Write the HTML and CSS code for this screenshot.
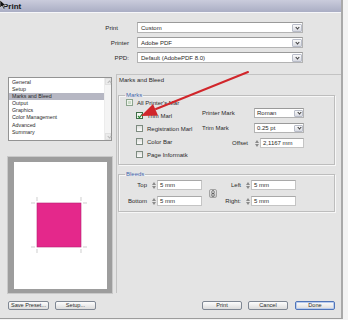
FILE: index.html
```html
<!DOCTYPE html>
<html lang="en">
<head>
  <meta charset="UTF-8" />
  <title>Print</title>
  <link rel="stylesheet" href="styles.css">
</head>
<body>
  <div class="dialog">
    <div class="titlebar">Print</div>

    <div class="content">
      <div class="presets">
        <label class="lbl lbl-print">Print</label>
        <div class="select"><span>Custom</span><i class="drop"></i></div>
        <label class="lbl">Printer</label>
        <div class="select"><span>Adobe PDF</span><i class="drop"></i></div>
        <label class="lbl">PPD:</label>
        <div class="select"><span>Default (AdobePDF 8.0)</span><i class="drop"></i></div>
      </div>

      <div class="main">
        <div class="side">
          <div class="list">
            <ul>
              <li>General</li>
              <li>Setup</li>
              <li class="active">Marks and Bleed</li>
              <li>Output</li>
              <li>Graphics</li>
              <li>Color Management</li>
              <li>Advanced</li>
              <li>Summary</li>
            </ul>
            <div class="scrollbar">
              <span class="sb-up"></span>
              <span class="sb-down"></span>
            </div>
          </div>

          <div class="preview">
            <svg width="91" height="127" viewBox="0 0 91 127">
              <rect x="23" y="41" width="44" height="44" fill="#e4288b" stroke="#b52073" stroke-width="0.6" />
              <g stroke="#b9b9b9" stroke-width="0.7">
                <line x1="17" y1="41" x2="21" y2="41" />
                <line x1="23" y1="35" x2="23" y2="39" />
                <line x1="69" y1="41" x2="73" y2="41" />
                <line x1="67" y1="35" x2="67" y2="39" />
                <line x1="17" y1="85" x2="21" y2="85" />
                <line x1="23" y1="87" x2="23" y2="91" />
                <line x1="69" y1="85" x2="73" y2="85" />
                <line x1="67" y1="87" x2="67" y2="91" />
              </g>
            </svg>
          </div>
        </div>

        <div class="panel">
          <div class="panel-title">Marks and Bleed</div>

          <fieldset class="group marks">
            <legend>Marks</legend>
            <div class="marks-body">
              <div class="checks">
                <div class="check top"><span class="cb mixed"></span>All Printer's Mar</div>
                <div class="check"><span class="cb checked"><svg width="6" height="6" viewBox="0 0 6 6"><path d="M1 3 L2.5 4.6 L5.2 1.2" fill="none" stroke="#23862c" stroke-width="1.1" /></svg></span>Trim Marl</div>
                <div class="check"><span class="cb"></span>Registration Marl</div>
                <div class="check"><span class="cb"></span>Color Bar</div>
                <div class="check"><span class="cb"></span>Page Informatk</div>
              </div>
              <div class="mark-opts">
                <label class="opt-lbl">Printer Mark</label>
                <div class="select small"><span>Roman</span><i class="drop"></i></div>
                <label class="opt-lbl">Trim Mark</label>
                <div class="select small"><span>0.25 pt</span><i class="drop"></i></div>
                <label class="opt-lbl right">Offset</label>
                <div class="spin-field"><i class="spin"></i><span class="field">2,1167 mm</span></div>
              </div>
            </div>
          </fieldset>

          <fieldset class="group bleeds">
            <legend>Bleeds</legend>
            <div class="bleeds-body">
              <label class="b-lbl">Top</label>
              <div class="spin-field"><i class="spin"></i><span class="field">5 mm</span></div>
              <div class="link">
                <svg width="4" height="7" viewBox="0 0 4 7">
                  <rect x="0.8" y="0.5" width="2.4" height="3.2" rx="1.2" fill="none" stroke="#555" stroke-width="0.8" />
                  <rect x="0.8" y="3.3" width="2.4" height="3.2" rx="1.2" fill="none" stroke="#555" stroke-width="0.8" />
                </svg>
              </div>
              <label class="b-lbl">Left</label>
              <div class="spin-field"><i class="spin"></i><span class="field">5 mm</span></div>
              <label class="b-lbl">Bottom</label>
              <div class="spin-field"><i class="spin"></i><span class="field">5 mm</span></div>
              <label class="b-lbl">Right:</label>
              <div class="spin-field"><i class="spin"></i><span class="field">5 mm</span></div>
            </div>
          </fieldset>
        </div>
      </div>

      <div class="footer">
        <button class="btn">Save Preset...</button>
        <button class="btn">Setup...</button>
        <span class="spacer"></span>
        <button class="btn">Print</button>
        <button class="btn">Cancel</button>
        <button class="btn default">Done</button>
      </div>
    </div>

    <!-- annotation drawn over the dialog -->
    <svg class="overlay" width="348" height="320" viewBox="0 0 348 320">
      <path d="M0 0 L0 8 L2 6 L3.4 9 L4.6 8.4 L3.3 5.6 L6 5.6 Z" fill="#111" stroke="#fff" stroke-width="0.5" />
      <line x1="248" y1="72" x2="156" y2="109" stroke="#d1262b" stroke-width="2" stroke-linecap="round" />
      <polygon points="141,116 158,115.5 153,104" fill="#d1262b" />
    </svg>
  </div>
</body>
</html>
```

FILE: styles.css
```css
/* Reset and base */
* {
  box-sizing: border-box;
  margin: 0;
  padding: 0;
}

body {
  width: 348px;
  height: 320px;
  overflow: hidden;
  background: #f3f3f3;
  font-family: "Liberation Sans", Arial, sans-serif;
  font-size: 6px;
  color: #2a2a2a;
}

.dialog {
  position: relative;
  width: 343px;
  height: 319px;
  background: #e4e4e4;
  border-right: 2px solid #a9a9a9;
  border-bottom: 1px solid #9c9c9c;
}

.titlebar {
  height: 13px;
  padding-left: 3px;
  display: flex;
  align-items: center;
  background: linear-gradient(#caccdc, #aaaec4);
  border-bottom: 1px solid #f6f6f9;
  font-size: 8px;
  font-weight: bold;
  color: #161616;
}

.content {
  padding: 9px 0 0 8px;
}

/* Preset rows */
.presets {
  display: grid;
  grid-template-columns: 123px 166px;
  grid-auto-rows: 11px;
  column-gap: 6px;
  row-gap: 4px;
}

.lbl {
  align-self: center;
  text-align: right;
  padding-right: 2px;
  font-size: 6.2px;
}

.lbl-print {
  padding-right: 13px;
}

.select {
  display: flex;
  align-items: center;
  padding-left: 3px;
  background: #fff;
  border: 1px solid #b3b3b3;
  border-top-color: #9a9a9a;
  white-space: nowrap;
}

.drop {
  margin-left: auto;
  margin-right: 0;
  width: 10px;
  height: 8px;
  background: linear-gradient(#fafafa, #d7d9e1);
  border: 1px solid #b9bdc9;
  border-radius: 1px;
  position: relative;
}

.drop::after {
  content: "";
  position: absolute;
  left: 3px;
  top: 1px;
  width: 2px;
  height: 2px;
  border-right: 1px solid #3a3a3a;
  border-bottom: 1px solid #3a3a3a;
  transform: rotate(45deg);
}

/* Left column */
.main {
  display: flex;
  margin-top: 11px;
}

.side {
  width: 104px;
  padding-top: 3px;
}

.list {
  height: 64px;
  display: flex;
  background: #fff;
  border: 1px solid #939393;
}

.list ul {
  flex: 1;
  list-style: none;
  padding-top: 0.5px;
  font-size: 5.3px;
}

.list li {
  height: 7.2px;
  line-height: 7.2px;
  padding-left: 3px;
}

.list li.active {
  background: #b6b7c3;
}

.scrollbar {
  width: 7px;
  display: flex;
  flex-direction: column;
  justify-content: space-between;
  background: #f4f4f4;
  border-left: 1px solid #ececec;
}

.sb-up,
.sb-down {
  height: 7px;
  background: #ebebeb;
  border: 1px solid #e0e0e0;
  position: relative;
}

.sb-up::after,
.sb-down::after {
  content: "";
  position: absolute;
  left: 1.5px;
  width: 2px;
  height: 2px;
  border-left: 1px solid #b8b8b8;
  border-top: 1px solid #b8b8b8;
}

.sb-up::after {
  top: 2px;
  transform: rotate(45deg);
}

.sb-down::after {
  top: 0.5px;
  transform: rotate(225deg);
}

.preview {
  margin-top: 16px;
  height: 136px;
  background: #fff;
  border: 5px solid #9d9d9d;
  border-left-width: 6px;
  border-bottom-width: 4px;
  box-shadow: 0 0 0 1px #c9c9c9;
}

.preview svg {
  display: block;
}

/* Right panel */
.panel {
  flex: 1;
  margin-left: 4px;
  padding: 0 6px 0 1px;
  border-left: 1px solid #c3c3c3;
  border-top: 1px solid #c3c3c3;
}

.panel-title {
  height: 10px;
  line-height: 10px;
  padding-left: 1px;
}

.group {
  border: 1px solid #bdbdbd;
  box-shadow: inset 1px 1px 0 #f7f7f7, 1px 1px 0 #f7f7f7;
}

.group legend {
  margin-left: 6px;
  padding: 0 1px;
  line-height: 6px;
  color: #4566ad;
}

.marks {
  margin-top: 7px;
  padding-bottom: 3px;
}

.marks-body {
  display: flex;
}

.checks {
  width: 83px;
  margin-top: -2px;
}

.check {
  height: 13px;
  display: flex;
  align-items: center;
  gap: 4px;
  padding-left: 17px;
  white-space: nowrap;
}

.check.top {
  padding-left: 7px;
}

.cb {
  width: 7px;
  height: 7px;
  flex-shrink: 0;
  border: 1px solid #7d8b80;
  background: linear-gradient(#dedfdc, #fbfbfb);
}

.cb.mixed {
  border-color: #8ca48d;
  background: #c9dbc6;
  box-shadow: inset 0 0 0 1px #eef2ec;
}

.cb.checked {
  border-color: #3f6d46;
  background: #f4f6f2;
}

.cb svg {
  display: block;
}

.mark-opts {
  display: grid;
  grid-template-columns: 52px 50px;
  grid-auto-rows: 10px;
  row-gap: 5px;
  padding-top: 10px;
}

.opt-lbl {
  align-self: center;
}

.opt-lbl.right {
  text-align: right;
  padding-right: 6px;
}

.select.small {
  padding-left: 2px;
}

.select.small .drop {
  width: 9px;
  height: 7px;
}

.select.small .drop::after {
  left: 2.5px;
  top: 0.5px;
}

.spin-field {
  display: flex;
  align-items: center;
}

.spin {
  width: 6px;
  height: 8px;
  position: relative;
}

.spin::before,
.spin::after {
  content: "";
  position: absolute;
  left: 1px;
  border-left: 2px solid transparent;
  border-right: 2px solid transparent;
}

.spin::before {
  top: 0.5px;
  border-bottom: 3px solid #8a8a8a;
}

.spin::after {
  bottom: 0.5px;
  border-top: 3px solid #8a8a8a;
}

.field {
  flex: 1;
  height: 10px;
  line-height: 9px;
  padding-left: 2px;
  background: #fff;
  border: 1px solid #c4c4c4;
  border-top-color: #a9a9a9;
}

.bleeds {
  margin-top: 6px;
  padding-bottom: 5px;
}

.bleeds-body {
  display: grid;
  grid-template-columns: 29px 51px 16px 18px 51px;
  grid-auto-rows: 10px;
  column-gap: 3px;
  row-gap: 6px;
  padding-top: 3px;
}

.b-lbl {
  align-self: center;
  text-align: right;
  padding-right: 1px;
}

.link {
  grid-column: 3;
  grid-row: 1 / 3;
  align-self: center;
  justify-self: center;
  width: 8px;
  height: 9px;
  display: flex;
  align-items: center;
  justify-content: center;
  background: linear-gradient(#e9e9e9, #c9c9c9);
  border: 1px solid #a3a3a3;
  border-radius: 2px;
}

.link svg {
  display: block;
}

/* Footer */
.footer {
  display: flex;
  margin-top: 8px;
  padding-right: 6px;
  gap: 6px;
}

.spacer {
  flex: 1;
}

.btn {
  width: 41px;
  height: 9px;
  font-family: inherit;
  font-size: 5.6px;
  line-height: 7px;
  color: #2a2a2a;
  background: linear-gradient(#fdfdfd, #dcdcdc);
  border: 1px solid #7f8793;
  border-radius: 2px;
}

.footer .btn:nth-child(n+4) {
  width: 40px;
}

.btn.default {
  margin-left: 1px;
  border-color: #4f74b8;
  box-shadow: inset 0 0 0 1px #b8cbee;
}

.overlay {
  position: absolute;
  top: 0;
  left: 0;
  pointer-events: none;
}
```
